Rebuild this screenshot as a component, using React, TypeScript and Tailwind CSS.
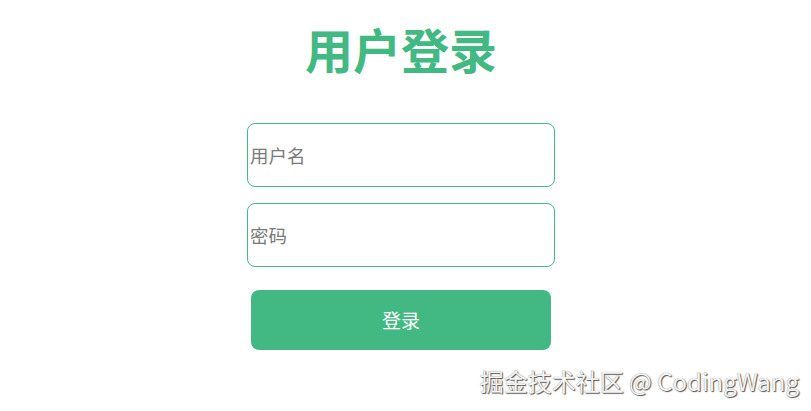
import React from "react";

export default function App() {
  const font = { fontFamily: '"Noto Sans CJK SC", "Noto Sans", sans-serif' };
  return (
    <div className="relative w-[811px] h-[411px] bg-white overflow-hidden" style={font}>
      <div className="w-[802px] flex flex-col items-center">
        <h1 className="mt-[18px] h-[60px] leading-[60px] text-[48px] font-bold text-[#42b983]">用户登录</h1>
        <input
          className="mt-[45px] w-[308px] h-[64px] border border-[#42b983] rounded-[8px] px-[2px] text-[18.5px] text-gray-700 placeholder:text-[#7a7a7a] outline-none"
          placeholder="用户名"
        />
        <input
          type="password"
          className="mt-[16px] w-[308px] h-[64px] border border-[#42b983] rounded-[8px] px-[2px] text-[18.5px] text-gray-700 placeholder:text-[#7a7a7a] outline-none"
          placeholder="密码"
        />
        <button className="mt-[23px] w-[300px] h-[60px] rounded-[8px] bg-[#42b983] text-white text-[19px] font-normal">
          登录
        </button>
      </div>
      <div
        className="absolute right-[12px] top-[363px] text-[24px] leading-[36px] text-[#f4f4f4] whitespace-nowrap"
        style={{ textShadow: "1px 1px 1px #555, 0 0 1px #777" }}
      >
        掘金技术社区 @ CodingWang
      </div>
    </div>
  );
}
